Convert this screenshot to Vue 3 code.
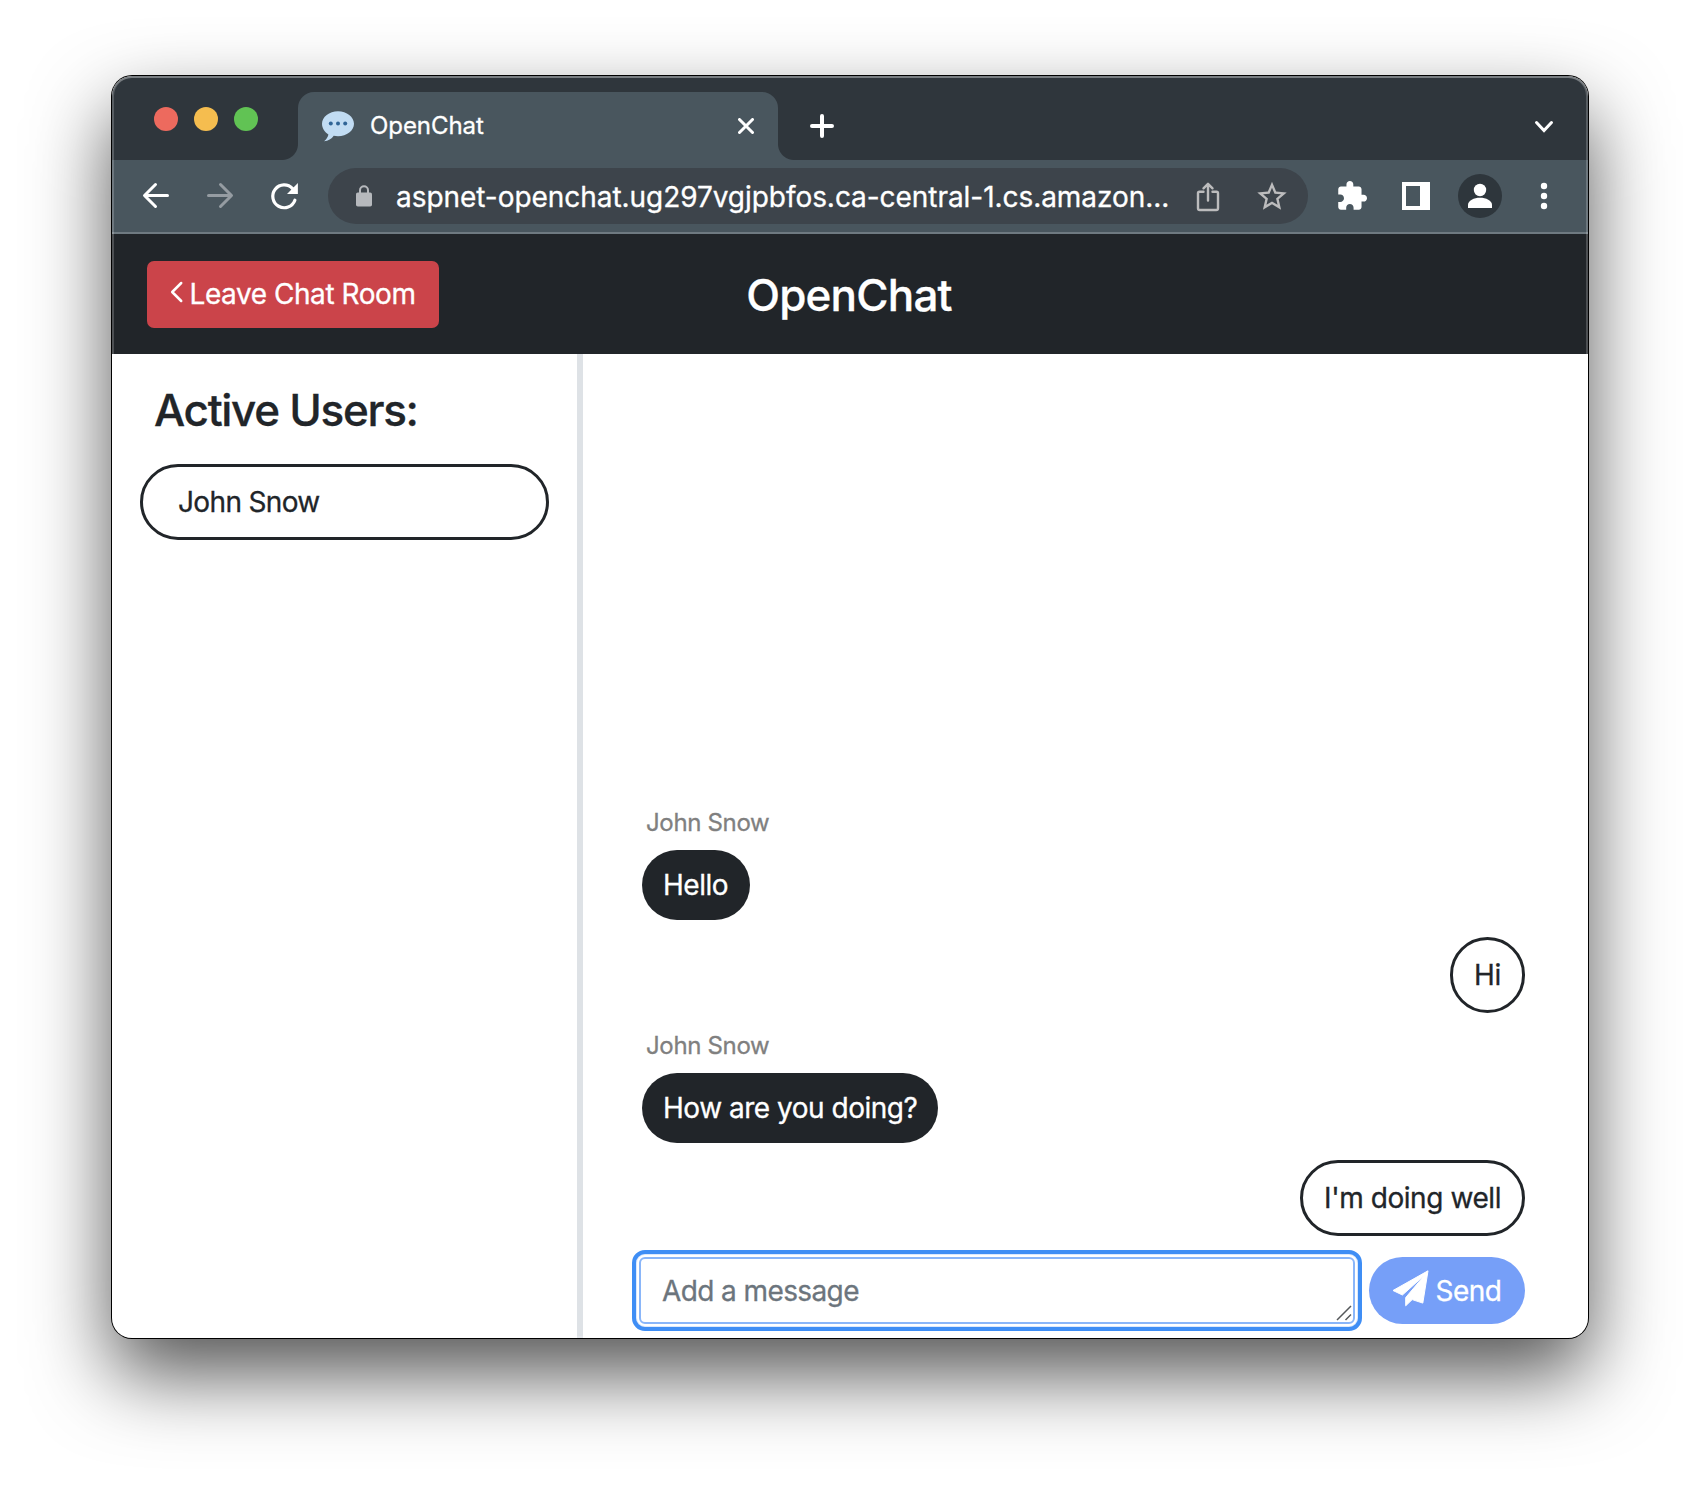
<script setup>
import { ref } from 'vue'

const url = 'aspnet-openchat.ug297vgjpbfos.ca-central-1.cs.amazon...'
const users = ['John Snow']
const messages = [
  { id: 1, from: 'John Snow', text: 'Hello' },
  { id: 2, from: null, text: 'Hi' },
  { id: 3, from: 'John Snow', text: 'How are you doing?' },
  { id: 4, from: null, text: "I'm doing well" },
]
const draft = ref('')
</script>

<template>
  <div class="desktop">
    <div class="window">
      <div class="tabstrip">
        <div class="lights">
          <span class="light red"></span>
          <span class="light amber"></span>
          <span class="light green"></span>
        </div>
        <div class="tab">
          <svg class="favicon" width="32" height="31" viewBox="0 0 32 31">
            <path d="M16 .3C7.200.3 0 5.900 0 12.800c0 4.600 2.800 8.600 6.400 10.600-.4 2.200-1.900 4.800-4.300 6.900 4.100-.3 7.500-2.300 9.600-5.500 1.400.3 2.800.4 4.300.4 8.800 0 16-5.500 16-12.400S24.800.3 16 .3z" fill="#c1dcf3" />
            <circle cx="8.800" cy="12.500" r="2" fill="#2f6496" />
            <circle cx="16" cy="12.500" r="2" fill="#2f6496" />
            <circle cx="23.200" cy="12.500" r="2" fill="#2f6496" />
          </svg>
          <span class="tab-title">OpenChat</span>
          <svg class="close" width="16" height="16" viewBox="0 0 16 16">
            <path d="M1.500 1.500l13 13M14.500 1.500l-13 13" stroke="#fff" stroke-width="3" stroke-linecap="round" />
          </svg>
        </div>
        <svg class="plus" width="24" height="24" viewBox="0 0 24 24">
          <path d="M12 2v20M2 12h20" stroke="#fff" stroke-width="4" stroke-linecap="round" />
        </svg>
        <svg class="down" width="20" height="14" viewBox="0 0 20 14">
          <path d="M2.500 2.500l7.500 8 7.500-8" fill="none" stroke="#fff" stroke-width="3" stroke-linecap="round" />
        </svg>
      </div>

      <div class="toolbar">
        <svg width="64" height="72" viewBox="0 0 64 72" fill="none" stroke="#fff" stroke-width="3" stroke-linecap="round" stroke-linejoin="round">
          <path d="M43.500 35.500H21M31.500 24.500l-11 11 11 11" />
        </svg>
        <svg width="64" height="72" viewBox="0 0 64 72" fill="none" stroke="#959ca2" stroke-width="3" stroke-linecap="round" stroke-linejoin="round">
          <path d="M20.500 35.500H43M32.500 24.500l11 11-11 11" />
        </svg>
        <svg width="64" height="72" viewBox="0 0 64 72" fill="none">
          <path d="M42.900 40.200A11.400 11.400 0 1 1 40.600 28.600" stroke="#fff" stroke-width="3.200" stroke-linecap="round" />
          <path d="M45.900 23v10.900H35z" fill="#fff" />
        </svg>
        <div class="omnibox">
          <svg class="lock" width="16" height="22" viewBox="0 0 16 22">
            <rect x="0" y="7.500" width="16" height="14" rx="1.800" fill="#b6b9bd" />
            <path d="M4 8.500V5.200a4 4 0 0 1 8 0v3.300" fill="none" stroke="#b6b9bd" stroke-width="2" />
          </svg>
          <span class="url">{{ url }}</span>
          <svg width="64" height="56" viewBox="0 0 64 56" fill="none" stroke="#bcbcbd" stroke-width="2.400" stroke-linecap="round" stroke-linejoin="round">
            <path d="M27.500 23.800h-4a1.500 1.500 0 0 0-1.500 1.500v14.900a1.800 1.800 0 0 0 1.800 1.800h16.400a1.800 1.800 0 0 0 1.800-1.800V25.300a1.500 1.500 0 0 0-1.500-1.500h-4" />
            <path d="M32 32.500V16M27.500 20.300l4.500-4.500 4.500 4.500" />
          </svg>
          <svg width="64" height="56" viewBox="0 0 64 56" fill="#bcbcbd">
            <path transform="translate(14.360 10.800) scale(1.470)" d="M22 9.240l-7.190-.62L12 2 9.190 8.630 2 9.240l5.460 4.730L5.820 21 12 17.270 18.180 21l-1.630-7.030L22 9.240zM12 15.400l-3.760 2.270 1-4.280-3.320-2.880 4.380-.38L12 6.100l1.710 4.040 4.380.38-3.320 2.880 1 4.280L12 15.400z" />
          </svg>
        </div>
        <svg width="64" height="72" viewBox="0 0 64 72" fill="#fff">
          <path transform="translate(15.500 19.700) scale(1.370)" d="M20.500 11H19V7c0-1.100-.9-2-2-2h-4V3.500C13 2.120 11.880 1 10.500 1S8 2.120 8 3.500V5H4c-1.100 0-1.990.9-1.990 2v3.800H3.500c1.490 0 2.700 1.210 2.700 2.700s-1.210 2.700-2.700 2.700H2V20c0 1.100.9 2 2 2h3.800v-1.500c0-1.490 1.210-2.700 2.700-2.700 1.490 0 2.700 1.210 2.700 2.700V22H17c1.100 0 2-.9 2-2v-4h1.500c1.380 0 2.500-1.120 2.500-2.500S21.880 11 20.500 11z" />
        </svg>
        <svg width="64" height="72" viewBox="0 0 64 72" fill="#fff">
          <path fill-rule="evenodd" d="M18 22h28v28H18zM22 26v20h14V26z" />
        </svg>
        <svg width="64" height="72" viewBox="0 0 64 72" fill="#fff">
          <circle cx="32" cy="36" r="22" fill="#2e363c" />
          <circle cx="32" cy="30" r="6.200" />
          <path d="M20 48v-3c0-4.500 6-7.200 12-7.200s12 2.700 12 7.200v3z" />
        </svg>
        <svg width="64" height="72" viewBox="0 0 64 72" fill="#fff">
          <circle cx="32" cy="26" r="3.200" />
          <circle cx="32" cy="36" r="3.200" />
          <circle cx="32" cy="46" r="3.200" />
        </svg>
      </div>

      <header class="header">
        <button class="leave" type="button">
          <svg width="13" height="22" viewBox="0 0 13 22">
            <path d="M11.200 2L2.200 11l9 9" fill="none" stroke="#fff" stroke-width="2.500" stroke-linecap="round" stroke-linejoin="round" />
          </svg>
          <span>Leave Chat Room</span>
        </button>
        <h1>OpenChat</h1>
      </header>

      <div class="body">
        <aside class="sidebar">
          <h2>Active Users:</h2>
          <div v-for="user in users" :key="user" class="user">{{ user }}</div>
        </aside>
        <main class="chat">
          <div v-for="m in messages" :key="m.id" class="message" :class="{ mine: !m.from }">
            <div v-if="m.from" class="sender">{{ m.from }}</div>
            <div class="bubble">{{ m.text }}</div>
          </div>
          <form class="composer" @submit.prevent>
            <div class="field">
              <textarea v-model="draft" rows="1" placeholder="Add a message"></textarea>
              <svg class="grip" width="16" height="16" viewBox="0 0 16 16">
                <path d="M1 15L15 1M9.500 15L15 9.500" stroke="#55585b" stroke-width="1.500" />
              </svg>
            </div>
            <button class="send" type="submit">
              <svg width="37" height="37" viewBox="0 0 37 37" fill="#fff" stroke="#fff" stroke-width="1" stroke-linejoin="round">
                <path d="M36 .8L1 20.500l9.400 4.500L32.500 5.200 13.700 27.600v8.200l6.500-6.200 10.600 3.500z" />
              </svg>
              <span>Send</span>
            </button>
          </form>
        </main>
      </div>
      <div class="rim"></div>
    </div>
  </div>
</template>

<style>
body {
  margin: 0;
  background: #fff;
}
</style>

<style scoped>
* {
  box-sizing: border-box;
}

.desktop {
  width: 1700px;
  height: 1486px;
  padding: 76px 112px 0;
  overflow: hidden;
  background: #fff;
  font-family: Inter, "Liberation Sans", sans-serif;
  color: #212529;
  -webkit-text-stroke: 0.3px currentColor;
}

.window {
  position: relative;
  display: flex;
  flex-direction: column;
  width: 1476px;
  height: 1262px;
  border-radius: 20px;
  background: #fff;
  box-shadow: 0 0 0 1px #000, 0 36px 80px rgba(0, 0, 0, 0.68);
}

.rim {
  position: absolute;
  inset: 0;
  border-radius: 20px;
  box-shadow: inset 0 0 0 2px rgba(255, 255, 255, 0.2), inset 0 2px 0 rgba(255, 255, 255, 0.2);
  pointer-events: none;
}

svg {
  display: block;
  flex: none;
}

.tabstrip {
  display: flex;
  height: 84px;
  padding: 16px 34px 0 42px;
  border-radius: 20px 20px 0 0;
  background: #2f363c;
}

.lights {
  display: flex;
  gap: 16px;
  width: 144px;
  padding-top: 15px;
}

.light {
  width: 24px;
  height: 24px;
  border-radius: 50%;
}

.red { background: #ed6a5e; }
.amber { background: #f5bd4f; }
.green { background: #61c354; }

.tab {
  position: relative;
  display: flex;
  align-items: center;
  width: 480px;
  height: 68px;
  padding: 0 24px;
  border-radius: 16px 16px 0 0;
  background: #49565e;
}

.tab::before,
.tab::after {
  content: "";
  position: absolute;
  bottom: 0;
  width: 16px;
  height: 16px;
}

.tab::before {
  left: -16px;
  background: radial-gradient(circle at 0 0, transparent 15.5px, #49565e 16.5px);
}

.tab::after {
  right: -16px;
  background: radial-gradient(circle at 100% 0, transparent 15.5px, #49565e 16.5px);
}

.tab-title {
  flex: 1;
  margin-left: 16px;
  padding-bottom: 1px;
  color: #fff;
  font-size: 24px;
  line-height: 30px;
  letter-spacing: -0.06px;
}

.plus {
  margin: 22px 0 0 32px;
}

.down {
  margin: 28px 0 0 auto;
}

.toolbar {
  display: flex;
  height: 74px;
  padding: 0 12px;
  border-bottom: 2px solid #6f7a81;
  background: #49565e;
}

.omnibox {
  display: flex;
  align-items: center;
  width: 980px;
  height: 56px;
  margin: 8px 12px;
  padding: 0 4px 0 28px;
  border-radius: 28px;
  background: #3d444b;
}

.url {
  flex: 1;
  padding: 1px 0 0 24px;
  color: #fff;
  font-size: 28px;
  line-height: 36px;
  letter-spacing: -0.05px;
  white-space: nowrap;
}

.header {
  display: grid;
  grid-template-columns: 1fr auto 1fr;
  align-items: center;
  height: 120px;
  padding: 0 35px;
  background: #212529;
}

.header h1 {
  margin: 2px 2px 0 0;
  color: #fff;
  font-size: 44px;
  font-weight: 500;
  line-height: 52px;
  letter-spacing: -0.8px;
}

.leave {
  display: flex;
  align-items: center;
  width: 292px;
  height: 67px;
  padding: 0 0 0 23px;
  border: 0;
  border-radius: 7px;
  background: #cb444a;
  color: #fff;
  font: 400 28px/42px Inter, "Liberation Sans", sans-serif;
  letter-spacing: -0.44px;
  white-space: nowrap;
  -webkit-text-stroke: 0.3px currentColor;
}

.leave svg {
  margin-bottom: 4px;
}

.leave span {
  margin-left: 6.500px;
}

.body {
  display: flex;
  flex: 1;
}

.sidebar {
  width: 471px;
  padding: 30px 28px 0 28px;
  border-right: 6px solid #dee2e6;
}

.sidebar h2 {
  margin: 0 0 28px 14px;
  font-size: 44px;
  font-weight: 500;
  line-height: 52px;
  letter-spacing: -1.3px;
}

.user {
  height: 76px;
  padding-left: 35px;
  border: 3px solid #212529;
  border-radius: 38px;
  font-size: 28px;
  line-height: 71px;
  letter-spacing: -0.65px;
}

.chat {
  display: flex;
  flex: 1;
  flex-direction: column;
  justify-content: flex-end;
  padding: 0 63px 14px 59px;
}

.message {
  display: flex;
  flex-direction: column;
  align-items: flex-start;
}

.message.mine {
  align-items: flex-end;
  margin: 17px 0 14px;
}

.sender {
  margin: 0 0 9px 4px;
  padding-top: 1px;
  color: #808080;
  font-size: 24px;
  line-height: 36px;
  letter-spacing: -0.34px;
}

.bubble {
  min-width: 108px;
  height: 70px;
  padding: 0 21px;
  border-radius: 35px;
  background: #212529;
  color: #fff;
  font-size: 28px;
  line-height: 71px;
  letter-spacing: -0.48px;
  white-space: nowrap;
}

.mine .bubble {
  min-width: 75px;
  height: 76px;
  border: 3px solid #212529;
  border-radius: 38px;
  background: #fff;
  color: #212529;
  letter-spacing: -0.43px;
}

.composer {
  display: flex;
  gap: 14px;
  margin: 7px 0 0 -3px;
}

.field {
  position: relative;
  flex: 1;
  height: 67px;
}

textarea {
  display: block;
  width: 100%;
  height: 67px;
  padding: 11px 21px 10px;
  overflow: hidden;
  border: 2px solid #8ab6f9;
  border-radius: 6px;
  outline: 4px solid #3f8ef5;
  outline-offset: 3px;
  box-shadow: 0 0 0 2px #fff, 0 0 0 3px #dbe8fd;
  background: #fff;
  color: #212529;
  font: 400 28px/42px Inter, "Liberation Sans", sans-serif;
  letter-spacing: -0.6px;
  resize: none;
}

textarea::placeholder {
  color: #6c757d;
  opacity: 1;
  -webkit-text-stroke: 0.3px #6c757d;
}

.grip {
  position: absolute;
  right: 3px;
  bottom: 3px;
}

.send {
  display: flex;
  align-items: center;
  width: 156px;
  height: 67px;
  padding: 0 0 0 23px;
  border: 0;
  border-radius: 34px;
  background: #769ff8;
  color: #fff;
  font: 400 28px/42px Inter, "Liberation Sans", sans-serif;
  letter-spacing: -0.5px;
  -webkit-text-stroke: 0.3px currentColor;
}

.send svg {
  margin-bottom: 5px;
}

.send span {
  margin-left: 6.500px;
}
</style>
